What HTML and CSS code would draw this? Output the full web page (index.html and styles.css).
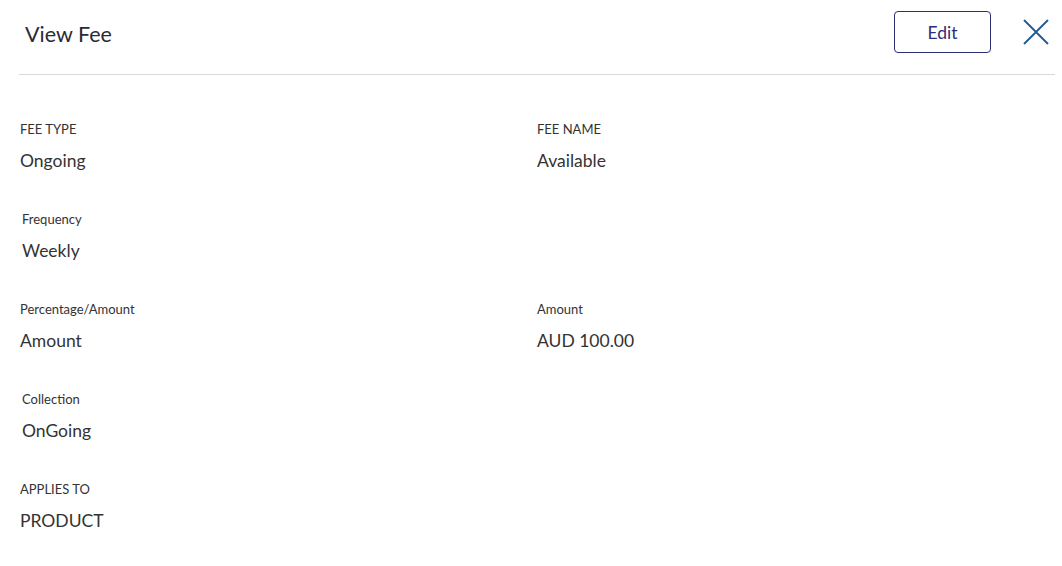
FILE: index.html
```html
<!DOCTYPE html>
<html>
<head>
<meta charset="utf-8">
<link rel="stylesheet" href="styles.css">
</head>
<body>
<div class="panel">
  <header class="header">
    <h1 class="title">View Fee</h1>
    <div class="actions">
      <button class="btn-edit">Edit</button>
      <button class="btn-close" aria-label="Close">
        <svg width="26" height="26" viewBox="0 0 26 26"><path d="M1 1L25 25M25 1L1 25" stroke="#1f5a8f" stroke-width="1.8" fill="none"/></svg>
      </button>
    </div>
  </header>
  <main class="details">
    <div class="field"><div class="label">FEE TYPE</div><div class="value">Ongoing</div></div>
    <div class="field"><div class="label">FEE NAME</div><div class="value">Available</div></div>
    <div class="field indent"><div class="label">Frequency</div><div class="value">Weekly</div></div>
    <div class="field"></div>
    <div class="field"><div class="label">Percentage/Amount</div><div class="value">Amount</div></div>
    <div class="field"><div class="label">Amount</div><div class="value">AUD 100.00</div></div>
    <div class="field indent"><div class="label">Collection</div><div class="value">OnGoing</div></div>
    <div class="field"></div>
    <div class="field"><div class="label">APPLIES TO</div><div class="value">PRODUCT</div></div>
    <div class="field"></div>
  </main>
</div>
</body>
</html>
```
FILE: styles.css
```css
* { box-sizing: border-box; }
html, body { margin: 0; padding: 0; background: #fff; }
body { font-family: Lato, "Open Sans", sans-serif; color: #333; }
.panel { width: 1062px; }
.header {
  display: flex;
  align-items: center;
  justify-content: space-between;
  height: 75px;
  margin: 0 7px 0 19px;
  padding: 0 0 1px 6px;
  border-bottom: 1px solid #d9d9d9;
}
.title { margin: 0; font-size: 21.5px; font-weight: 400; color: #2b2b36; position: relative; top: -3px; }
.actions { display: flex; align-items: center; gap: 32px; margin-top: -9px; }
.btn-edit {
  width: 97px; height: 42px;
  border: 1px solid #2b2f77;
  border-radius: 4px;
  background: #fff;
  color: #2b2f77;
  font-family: inherit;
  font-size: 17.5px;
  padding: 0;
}
.btn-close { border: 0; background: none; padding: 0; width: 26px; height: 26px; display: block; margin-right: 6px; }
.btn-close svg { display: block; }
.details {
  display: grid;
  grid-template-columns: 517px 1fr;
  padding: 44px 0 0 20px;
}
.field { height: 90px; }
.field.indent { padding-left: 2px; }
.label { font-size: 13px; line-height: 20px; height: 20px; color: #333; }
.value { font-size: 17.5px; line-height: 24px; margin-top: 10px; color: #333; }
```
